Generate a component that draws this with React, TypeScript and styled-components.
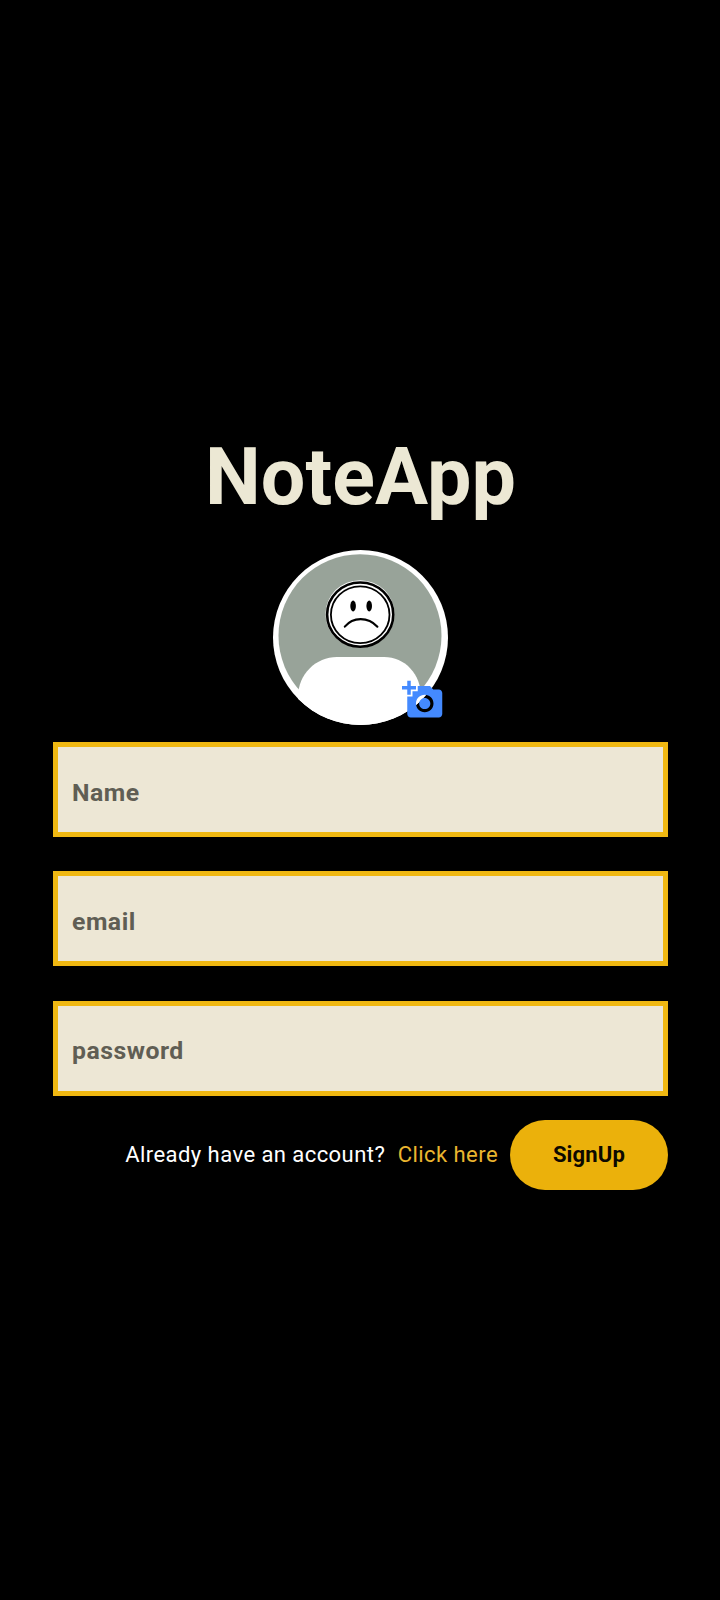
import React from "react";
import styled, { createGlobalStyle } from "styled-components";
import { MdAddAPhoto } from "react-icons/md";

const GlobalStyle = createGlobalStyle`
  * { box-sizing: border-box; }
  html, body { margin: 0; background: #000; }
  body { font-family: Roboto, "Liberation Sans", sans-serif; }
`;

const Page = styled.main`
  min-height: 1600px;
  padding: 427px 52px 0 53px;
  display: flex;
  flex-direction: column;
  align-items: center;
  background: #000;
`;

const Title = styled.h1`
  margin: 0;
  height: 123px;
  line-height: 100px;
  font-size: 79px;
  font-weight: 700;
  letter-spacing: 0.1px;
  color: #ece8d4;
`;

const Avatar = styled.div`
  position: relative;
  width: 175px;
  height: 175px;
  margin-bottom: 17px;

  > svg { display: block; }
`;

const PhotoButton = styled.button`
  position: absolute;
  left: 129px;
  top: 129px;
  padding: 0;
  border: 0;
  background: none;
  color: #448aff;
  font-size: 42px;
  line-height: 0;
`;

const Form = styled.form`
  width: 100%;
  display: flex;
  flex-direction: column;
`;

const Field = styled.input`
  width: 100%;
  height: 95px;
  margin-bottom: 34.4px;
  padding: 5px 14px 0;
  border: 5px solid #f0b812;
  border-radius: 0;
  outline: 0;
  background: #ede7d5;
  color: #000;
  font: 700 24.8px Roboto, sans-serif;
  letter-spacing: 0.5px;

  &::placeholder { color: #605e54; opacity: 1; }
`;

const Footer = styled.div`
  display: flex;
  align-items: center;
  justify-content: flex-end;
  margin-top: -10.4px;
  font-size: 22.05px;
  letter-spacing: 0.42px;
  white-space: pre;
`;

const Prompt = styled.span`
  color: #fff;
  margin-right: 12.5px;
`;

const Link = styled.a`
  color: #eab52f;
  margin-right: 12px;
`;

const Submit = styled.button`
  width: 158px;
  height: 70px;
  border: 0;
  border-radius: 35px;
  background: #ebb10b;
  color: #0d0900;
  font: 700 22.05px Roboto, sans-serif;
  letter-spacing: 0.15px;
`;

const fields = [
  { name: "Name", type: "text" },
  { name: "email", type: "email" },
  { name: "password", type: "password" },
];

function SadPortrait() {
  return (
    <svg width="175" height="175" viewBox="0 0 175 175" aria-hidden="true">
      <circle cx="87.5" cy="87.5" r="87.5" fill="#fff" />
      <circle cx="87" cy="85.7" r="81.5" fill="#98a399" />
      <path d="M25 180V147C25 124 43 107 64 107H111C132 107 148 124 148 147V180Z" fill="#fff" clipPath="url(#portrait)" />
      <clipPath id="portrait"><circle cx="87.5" cy="87.5" r="87.5" /></clipPath>
      <ellipse cx="87" cy="64" rx="34.5" ry="33.8" fill="#fff" />
      <ellipse cx="87.2" cy="64.6" rx="33.1" ry="32.1" fill="#fff" stroke="#000" strokeWidth="2.6" />
      <ellipse cx="87.2" cy="64.7" rx="29.3" ry="28.4" fill="none" stroke="#000" strokeWidth="1.8" />
      <ellipse cx="80.1" cy="56" rx="2.8" ry="5.4" />
      <ellipse cx="96.2" cy="56" rx="2.8" ry="5.4" />
      <path d="M71.8 76.7C80 66.6 95 66.6 104.4 76.7" fill="none" stroke="#000" strokeWidth="2.1" strokeLinecap="round" />
    </svg>
  );
}

export default function App() {
  return (
    <>
      <GlobalStyle />
      <Page>
        <Title>NoteApp</Title>
        <Avatar>
          <SadPortrait />
          <PhotoButton type="button" aria-label="Add photo">
            <MdAddAPhoto />
          </PhotoButton>
        </Avatar>
        <Form>
          {fields.map((f) => (
            <Field key={f.name} type={f.type} placeholder={f.name} />
          ))}
          <Footer>
            <Prompt>Already have an account?</Prompt>
            <Link>Click here</Link>
            <Submit type="button">SignUp</Submit>
          </Footer>
        </Form>
      </Page>
    </>
  );
}
